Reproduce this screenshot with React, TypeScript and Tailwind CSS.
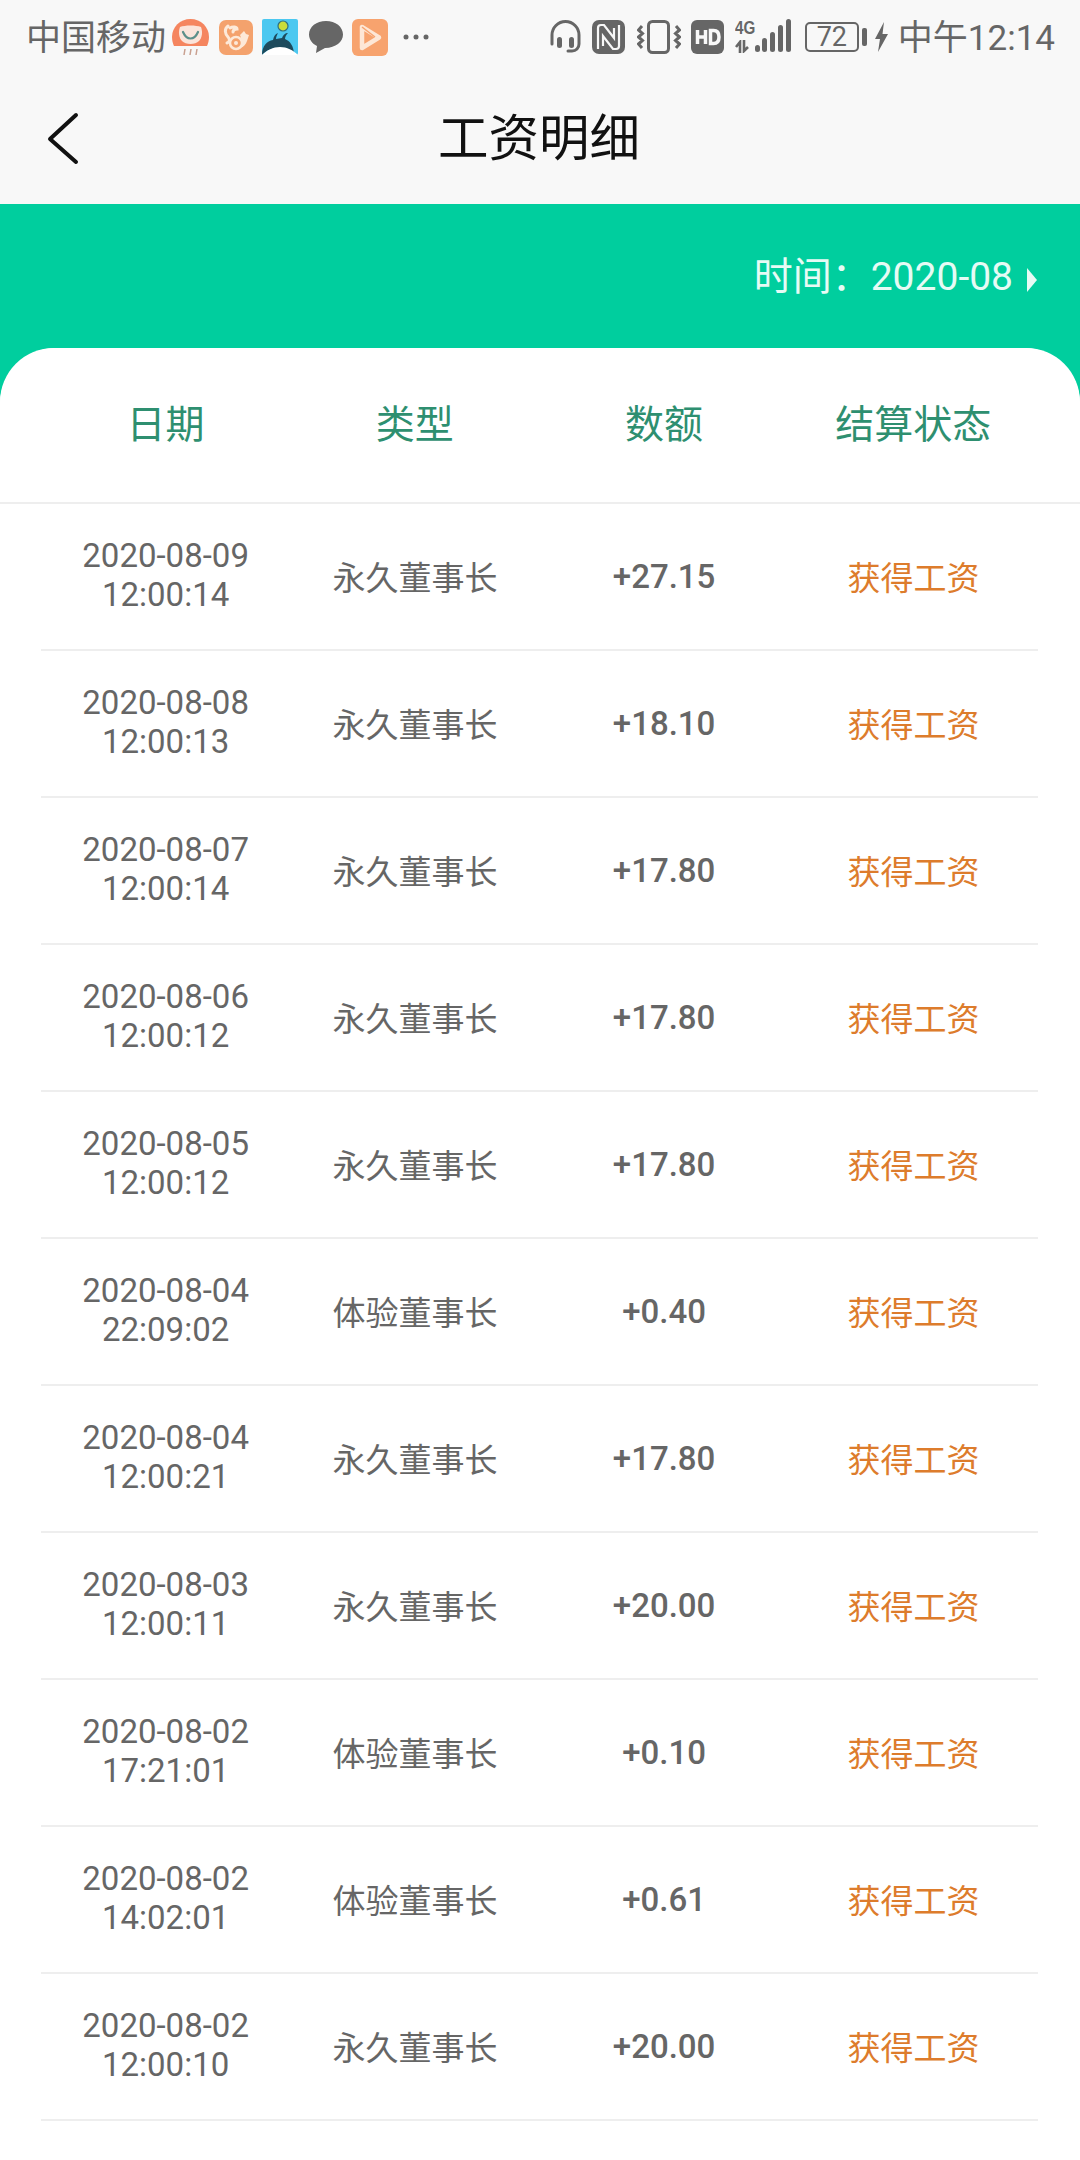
const rows = [
  ["2020-08-09", "12:00:14", "永久董事长", "+27.15"],
  ["2020-08-08", "12:00:13", "永久董事长", "+18.10"],
  ["2020-08-07", "12:00:14", "永久董事长", "+17.80"],
  ["2020-08-06", "12:00:12", "永久董事长", "+17.80"],
  ["2020-08-05", "12:00:12", "永久董事长", "+17.80"],
  ["2020-08-04", "22:09:02", "体验董事长", "+0.40"],
  ["2020-08-04", "12:00:21", "永久董事长", "+17.80"],
  ["2020-08-03", "12:00:11", "永久董事长", "+20.00"],
  ["2020-08-02", "17:21:01", "体验董事长", "+0.10"],
  ["2020-08-02", "14:02:01", "体验董事长", "+0.61"],
  ["2020-08-02", "12:00:10", "永久董事长", "+20.00"],
];

const G = "#666666";

function LeftIcons() {
  return (
    <div className="flex items-center ml-[6px]">
      <svg width="37" height="37" viewBox="0 0 37 37" className="shrink-0">
        <path d="M18.500 0C8 0 0 8 0 18c0 3 .6 6 2 9h33c1.400-3 2-6 2-9C37 8 29 0 18.500 0z" fill="#f5855f" />
        <path d="M8 8c5-2 16-2 21 0 2 5 1 11-2 14-2 2-5 3-8.500 3S12 24 10 22C7 19 6 13 8 8z" fill="#fbe4da" />
        <path d="M11 13c2 4.500 4.500 6.500 7.500 6.500S24 17.500 26 13" fill="none" stroke="#5c8f8a" strokeWidth="2.200" strokeLinecap="round" />
        <path d="M13 30l-1 6M19 30l-1 6M25 30l-1 6" stroke="#c9a090" strokeWidth="1.500" />
      </svg>
      <svg width="34" height="35" viewBox="0 0 34 35" className="ml-[10px] shrink-0">
        <rect x="0" y="0" width="34" height="35" rx="7" fill="#f4a26d" />
        <path d="M9 6c-4 3-3 8 0 11 2 2 2 5-1 6M11 8c3-2 7-1 7 1-2 0-4 1-4 3" fill="none" stroke="#fde9d8" strokeWidth="3" strokeLinecap="round" />
        <circle cx="17" cy="23" r="6" fill="none" stroke="#fde9d8" strokeWidth="2.500" />
        <circle cx="17" cy="23" r="2" fill="#fde9d8" />
        <path d="M21 15l4-4 2 3 3 1-2 6c-1 3-3 6-7 7 2-3 2-8 0-13z" fill="#fde9d8" />
      </svg>
      <svg width="36" height="36" viewBox="0 0 36 36" className="ml-[9px] shrink-0">
        <rect width="36" height="36" fill="#4cc8f0" rx="2" />
        <circle cx="21" cy="7" r="5" fill="#c9dd3a" stroke="#2f6f80" strokeWidth="1.200" />
        <path d="M0 36c0-9 5-14 11-15 1-4 2-6 5-7-1 2-2 4-2 6l6-1c1-3 3-5 6-5-2 2-3 4-3 6 5 2 9 7 9 16-5-5-10-7-16-7S5 31 0 36z" fill="#1d4a5c" />
        <path d="M0 36c5-5 11-8 18-8s13 3 18 8z" fill="#ffffff" />
      </svg>
      <svg width="34" height="33" viewBox="0 0 34 33" className="ml-[11px] shrink-0">
        <path d="M17 0C7.500 0 0 5.800 0 13.500c0 5 3.300 9.300 8 11.500L7 32l9-5.100C26.500 27 34 21 34 13.500 34 5.800 26.500 0 17 0z" fill={G} />
      </svg>
      <svg width="36" height="37" viewBox="0 0 36 37" className="ml-[9px] shrink-0">
        <rect width="36" height="37" rx="6" fill="#f7a36e" />
        <path d="M10 8v21l17-10.500z" fill="none" stroke="#fde7d6" strokeWidth="4.500" strokeLinejoin="round" />
        <path d="M10 8l13 10" stroke="#f7a36e" strokeWidth="1.500" />
      </svg>
      <svg width="26" height="6" viewBox="0 0 26 6" className="ml-[15px] shrink-0">
        <circle cx="3" cy="3" r="2.500" fill={G} />
        <circle cx="13" cy="3" r="2.500" fill={G} />
        <circle cx="23" cy="3" r="2.500" fill={G} />
      </svg>
    </div>
  );
}

function RightIcons() {
  return (
    <div className="flex items-center">
      <svg width="31" height="34" viewBox="0 0 31 34" className="shrink-0">
        <path d="M2 24v-9a13.500 13.500 0 0 1 27 0v9c0 4-3 7-7 7h-4" fill="none" stroke={G} strokeWidth="3" strokeLinecap="round" />
        <rect x="7" y="17" width="5" height="11" rx="2.500" fill={G} />
        <rect x="19" y="17" width="5" height="11" rx="2.500" fill={G} />
      </svg>
      <svg width="33" height="34" viewBox="0 0 33 34" className="ml-[11px] shrink-0">
        <rect width="33" height="34" rx="7" fill={G} />
        <path d="M6 29V8c0-2 1-3 3-3h3l10 13V8" fill="none" stroke="#f8f8f8" strokeWidth="2.200" />
        <path d="M27 5v21c0 2-1 3-3 3h-3L11 16v10" fill="none" stroke="#f8f8f8" strokeWidth="2.200" />
      </svg>
      <svg width="44" height="34" viewBox="0 0 44 34" className="ml-[12px] shrink-0">
        <rect x="11.500" y="1.500" width="20" height="31" rx="4" fill="none" stroke={G} strokeWidth="3" />
        <path d="M5 6L1.500 10l4 3.500-4 3.500 4 3.500-4 3.500 3.500 4M39 6l3.500 4-4 3.500 4 3.500-4 3.500 4 3.500-3.500 4" fill="none" stroke={G} strokeWidth="3" />
      </svg>
      <svg width="33" height="34" viewBox="0 0 33 34" className="ml-[10px] shrink-0">
        <rect width="33" height="34" rx="6" fill={G} />
        <path d="M6.500 10v14M14.500 10v14M6.500 17h8" stroke="#f8f8f8" strokeWidth="3.500" fill="none" />
        <path d="M19.500 10.500v13h3c3.500 0 5.500-2.500 5.500-6.500s-2-6.500-5.500-6.500z" fill="none" stroke="#f8f8f8" strokeWidth="3.500" />
      </svg>
      <div className="relative w-[56px] h-[36px] ml-[11px] shrink-0">
        <span className="absolute left-0 top-[-1px] origin-left scale-x-[0.8] text-[19px] leading-[19px] font-bold text-[#666666] font-['Liberation_Sans',sans-serif]">4G</span>
        <svg width="20" height="13" viewBox="0 0 20 13" className="absolute left-0 top-[21px]">
          <path d="M5 13V2L1 7M9 0v11l4-4" fill="none" stroke={G} strokeWidth="2.600" />
        </svg>
        <svg width="36" height="34" viewBox="0 0 36 34" className="absolute right-0 top-0">
          <rect x="0" y="26" width="5" height="7" rx="2.500" fill={G} />
          <rect x="7" y="19" width="5" height="14" rx="2.500" fill={G} />
          <rect x="15" y="13" width="5" height="20" rx="2.500" fill={G} />
          <rect x="23" y="6" width="5" height="27" rx="2.500" fill={G} />
          <rect x="31" y="0" width="5" height="33" rx="2.500" fill={G} />
        </svg>
      </div>
      <div className="flex items-center ml-[14px] shrink-0">
        <div className="w-[54px] h-[30px] rounded-[5px] border-2 border-[#666666] flex items-center justify-center text-[27px] leading-none text-[#666666]">
          72
        </div>
        <div className="w-[5px] h-[18px] rounded-[2px] bg-[#666666] ml-[3px]" />
      </div>
      <svg width="13" height="30" viewBox="0 0 13 30" className="ml-[8px] shrink-0">
        <path d="M9 0L0 17h5l-2 13 10-18H7.500z" fill={G} />
      </svg>
    </div>
  );
}

export default function App() {
  return (
    <div className="w-[1080px] h-[2160px] overflow-hidden bg-white font-['Roboto','Noto_Sans_CJK_SC',sans-serif]">
      <div className="h-[204px] bg-[#f8f8f8]">
        <div className="h-[74px] pl-[26px] pr-[25px] flex items-center justify-between">
          <div className="flex items-center">
            <span className="text-[35px] text-[#666666] leading-none whitespace-nowrap pt-[2px]">中国移动</span>
            <LeftIcons />
          </div>
          <div className="flex items-center">
            <RightIcons />
            <span className="text-[35px] text-[#666666] leading-none ml-[10px] whitespace-nowrap pt-[2px]">中午12:14</span>
          </div>
        </div>
        <div className="relative h-[126px] pt-[4px] pr-[2px] flex items-center justify-center">
          <svg width="32" height="54" viewBox="0 0 32 54" className="absolute left-[47px] top-[38px]">
            <path d="M29 3L3 27l26 23" fill="none" stroke="#111111" strokeWidth="4" strokeLinecap="round" strokeLinejoin="round" />
          </svg>
          <span className="text-[50.5px] leading-none text-[#111111]">工资明细</span>
        </div>
      </div>

      <div className="bg-[#00ce9e] h-[198px]">
        <div className="h-[144px] pr-[42px] pt-[50px] flex items-start justify-end text-[#e6fbf5]">
          <span className="text-[39px] leading-[46px] whitespace-nowrap">时间：2020-08</span>
          <svg width="12" height="24" viewBox="0 0 12 24" className="ml-[13px] mt-[14px] shrink-0">
            <path d="M1 0l10 12L1 24z" fill="#e6fbf5" />
          </svg>
        </div>
        <div className="h-[54px] bg-white rounded-t-[56px]" />
      </div>

      <div className="bg-white -mt-[54px] relative rounded-t-[56px]">
        <div className="grid grid-cols-4 h-[156px] pl-[41px] pr-[42px] items-center border-b-2 border-[#eeeeee] text-[39px] leading-none text-[#2e8f70] text-center">
          <div>日期</div>
          <div>类型</div>
          <div>数额</div>
          <div>结算状态</div>
        </div>
        <div className="pl-[41px] pr-[42px]">
          {rows.map((r, i) => (
            <div key={i} className="grid grid-cols-4 h-[147px] items-center border-b-2 border-[#eeeeee] text-center text-[33px] text-[#666666]">
              <div className="leading-[39px] -mt-[4px]">
                <div>{r[0]}</div>
                <div>{r[1]}</div>
              </div>
              <div className="leading-[40px] mt-[5px]">{r[2]}</div>
              <div className="leading-[40px] font-medium">{r[3]}</div>
              <div className="leading-[40px] mt-[5px] text-[#dd7c2c]">获得工资</div>
            </div>
          ))}
        </div>
      </div>
    </div>
  );
}
